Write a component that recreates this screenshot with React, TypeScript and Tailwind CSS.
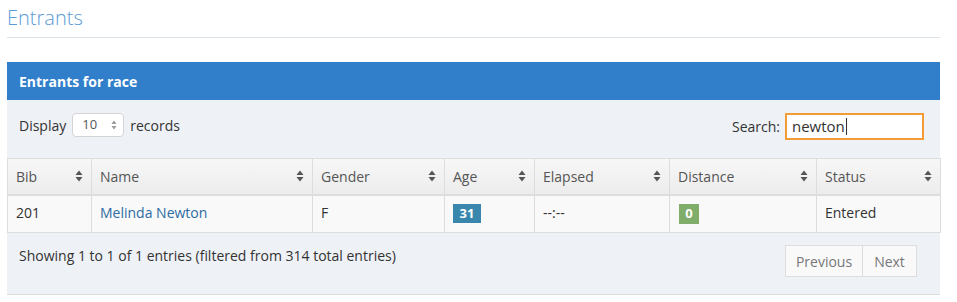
import React from "react";

const font = { fontFamily: '"Open Sans", "Liberation Sans", sans-serif' };

function SortIcon() {
  return (
    <svg width="8" height="12" viewBox="0 0 8 12" className="shrink-0">
      <path d="M4 0.5 L7.5 5 L0.5 5 Z" fill="#555" />
      <path d="M4 11.5 L7.5 7 L0.5 7 Z" fill="#555" />
    </svg>
  );
}

const columns = [
  { label: "Bib", w: "w-[84px]" },
  { label: "Name", w: "w-[221px]" },
  { label: "Gender", w: "w-[132px]" },
  { label: "Age", w: "w-[90px]" },
  { label: "Elapsed", w: "w-[135px]" },
  { label: "Distance", w: "w-[147px]" },
  { label: "Status", w: "w-[124px]" },
];

export default function App() {
  return (
    <div className="min-h-[302px] bg-white text-[14px] text-[#333]" style={font}>
      <div className="ml-[7px] w-[933px]">
        <h1 className="pt-[4px] pb-[5px] text-[20px] leading-[28px] font-light text-[#5b9bd5] border-b border-[#dde3ea]">
          Entrants
        </h1>

        <div className="mt-[24px] border-b border-[#ddd] bg-[#eef1f6]">
          <div className="flex h-[38px] items-center bg-[#317fcb] px-[12px] font-bold text-white">
            Entrants for race
          </div>

          <div className="flex h-[58px] items-start justify-between pt-[13px] pl-[12px] pr-[16px]">
            <div className="flex h-[24px] items-center gap-[6px]">
              <span>Display</span>
              <div className="flex h-[24px] w-[52px] items-center justify-between rounded-[4px] border border-[#d4d4d4] bg-white pl-[9px] pr-[6px] text-[#555]">
                <span className="text-[13px]">10</span>
                <svg width="6" height="10" viewBox="0 0 6 10">
                  <path d="M3 0.5 L5.5 4 L0.5 4 Z" fill="#999" />
                  <path d="M3 9.5 L5.5 6 L0.5 6 Z" fill="#999" />
                </svg>
              </div>
              <span>records</span>
            </div>
            <div className="flex h-[27px] items-center gap-[5px]">
              <span>Search:</span>
              <div className="flex h-[27px] w-[139px] items-center bg-[#f39c34] p-[2px]">
                <div className="flex h-full w-full items-center bg-white px-[5px] text-[15px] text-[#333]">
                  newton
                  <span className="ml-[1px] h-[17px] w-px bg-[#333]" />
                </div>
              </div>
            </div>
          </div>

          <table className="w-[933px] table-fixed border-collapse">
            <thead>
              <tr className="bg-gradient-to-b from-[#f7f7f7] to-[#ececec]">
                {columns.map((c) => (
                  <th
                    key={c.label}
                    className={`${c.w} h-[36px] border border-b-2 border-[#ddd] px-[8px] text-left font-normal text-[#555]`}
                  >
                    <div className="flex items-center justify-between">
                      <span>{c.label}</span>
                      <SortIcon />
                    </div>
                  </th>
                ))}
              </tr>
            </thead>
            <tbody>
              <tr className="bg-[#f9f9f9]">
                <td className="h-[38px] border border-[#ddd] px-[8px] pb-[2px]">201</td>
                <td className="border border-[#ddd] px-[8px] pb-[2px] text-[#2d6ca2]">Melinda Newton</td>
                <td className="border border-[#ddd] px-[8px] pb-[2px]">F</td>
                <td className="border border-[#ddd] px-[8px] pb-[2px]">
                  <span className="inline-flex h-[19px] w-[28px] items-center justify-center bg-[#3a87ad] text-[13px] font-bold text-white">
                    31
                  </span>
                </td>
                <td className="border border-[#ddd] px-[8px] pb-[2px]">--:--</td>
                <td className="border border-[#ddd] px-[8px] pb-[2px] pl-[9px]">
                  <span className="inline-flex h-[20px] w-[20px] items-center justify-center bg-[#80ad6a] text-[13px] font-bold text-white">
                    0
                  </span>
                </td>
                <td className="border border-[#ddd] px-[8px] pb-[2px]">Entered</td>
              </tr>
            </tbody>
          </table>

          <div className="flex h-[61px] items-start justify-between pt-[12px] pl-[12px] pr-[23px]">
            <span className="leading-[22px]">
              Showing 1 to 1 of 1 entries (filtered from 314 total entries)
            </span>
            <div className="flex h-[32px]">
              <button className="h-[32px] w-[78px] border border-[#ddd] bg-[#f9f9f9] text-[#777]">
                Previous
              </button>
              <button className="-ml-px h-[32px] w-[55px] border border-[#ddd] bg-[#f9f9f9] text-[#777]">
                Next
              </button>
            </div>
          </div>
        </div>
      </div>
    </div>
  );
}
